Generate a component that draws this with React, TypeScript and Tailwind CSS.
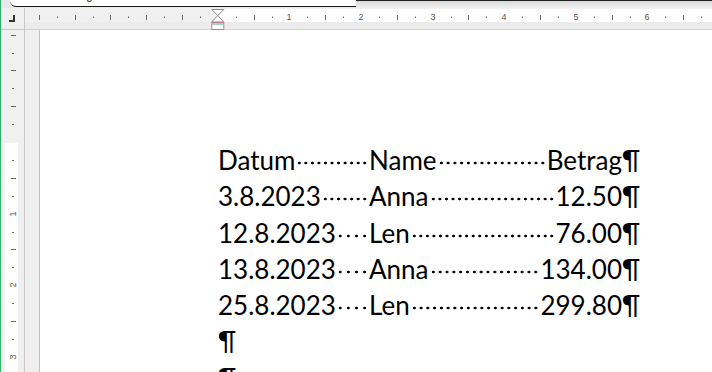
import React from "react";

const INCH = 71.6;
const Q = INCH / 4;

const rows: [string, string, string][] = [
  ["Datum", "Name", "Betrag"],
  ["3.8.2023", "Anna", "12.50"],
  ["12.8.2023", "Len", "76.00"],
  ["13.8.2023", "Anna", "134.00"],
  ["25.8.2023", "Len", "299.80"],
];

function HRuler() {
  const zero = 192.8;
  const ticks = [];
  for (let k = -10; k <= 27; k++) {
    const x = Math.round(zero + k * Q);
    if (k % 4 === 0 && k > 0) {
      ticks.push(
        <text key={k} x={x} y={12.3} textAnchor="middle" fontSize="9" fill="#555" fontFamily="'Liberation Sans', sans-serif">
          {k / 4}
        </text>
      );
    } else if (k === 0) {
      continue;
    } else if (Math.abs(k) % 2 === 1) {
      ticks.push(<rect key={k} x={x} y={8.5} width={1} height={1.5} fill="#666" />);
    } else {
      ticks.push(<rect key={k} x={x} y={7} width={1} height={5} fill="#666" />);
    }
  }
  return (
    <svg width="687" height="22" className="block">
      <rect x="0" y="0" width="687" height="22" fill="#f0f0f0" />
      <rect x={zero} y="1" width="687" height="13" fill="#ffffff" />
      <rect x="0" y="14" width="687" height="7" fill="#ebebeb" />
      <rect x="0" y="21" width="687" height="1" fill="#d2d2d2" />
      {ticks}
      <g transform={`translate(${zero - 6.5},0)`}>
        <polygon points="0.5,1.5 12.5,1.5 6.5,7.5" fill="#fff" stroke="#8c8c8c" strokeWidth="1" />
        <polygon points="6.5,7.5 0.5,14 12.5,14" fill="#fff" stroke="#8c8c8c" strokeWidth="1" />
        <rect x="0.5" y="14.5" width="12" height="7" fill="#fff" stroke="#c07a9e" strokeWidth="1" />
        <line x1="1" y1="16" x2="12" y2="16" stroke="#3cae72" strokeWidth="1" />
      </g>
    </svg>
  );
}

function VRuler() {
  const zero = 112;
  const ticks = [];
  for (let k = -6; k <= 13; k++) {
    const y = Math.round(zero + k * Q);
    if (k % 4 === 0 && k > 0) {
      ticks.push(
        <text
          key={k}
          x={11.5}
          y={y}
          textAnchor="middle"
          dominantBaseline="central"
          fontSize="9"
          fill="#555"
          fontFamily="'Liberation Sans', sans-serif"
          transform={`rotate(-90 11.5 ${y})`}
        >
          {k / 4}
        </text>
      );
    } else if (k === 0) {
      continue;
    } else if (Math.abs(k) % 2 === 1) {
      ticks.push(<rect key={k} x={11} y={y} width={2} height={1} fill="#666" />);
    } else {
      ticks.push(<rect key={k} x={10} y={y} width={5} height={1} fill="#666" />);
    }
  }
  return (
    <svg width="23" height="342" className="block">
      <rect x="0" y="0" width="23" height="342" fill="#f0f0f0" />
      <rect x="4" y={zero + 1} width="13" height="342" fill="#ffffff" />
      {ticks}
    </svg>
  );
}

function Leader() {
  return (
    <span className="mx-[1px] min-w-0 flex-1 bg-[radial-gradient(circle_at_50%_21px,#000_1.15px,transparent_1.7px)] bg-[length:6.5px_100%] bg-repeat-space" />
  );
}

function Row({ a, b, c }: { a: string; b: string; c: string }) {
  return (
    <div className="flex whitespace-nowrap">
      <div className="flex w-[404px]">
        <div className="flex w-[151px] shrink-0">
          <span className="shrink-0">{a}</span>
          <Leader />
        </div>
        <div className="flex min-w-0 flex-1">
          <span className="shrink-0">{b}</span>
          <Leader />
        </div>
        <span className="shrink-0">{c}</span>
      </div>
      <span>¶</span>
    </div>
  );
}

export default function App() {
  return (
    <div className="flex h-[372px] w-[712px] overflow-hidden bg-white">
      <div className="w-px shrink-0 bg-[#2fb36a]" />
      <div className="flex min-w-0 flex-1 flex-col">
        {/* top strip */}
        <div className="relative flex h-[8px] shrink-0 bg-[#e9e9e9]">
          <div className="w-[9px] shrink-0" />
          <div className="relative h-[7px] w-[346px] shrink-0 overflow-hidden rounded-bl-[6px] border-b-[1.5px] border-[#1a1a1a] bg-white">
            <span className="absolute left-[76px] top-[-11px] font-['Liberation_Sans',sans-serif] text-[12px] leading-[12px] text-[#333]">
              g
            </span>
          </div>
          <div className="flex-1 border-t border-[#222] bg-gradient-to-b from-[#d9d9d9] to-[#efefef]" />
        </div>
        {/* ruler row */}
        <div className="flex h-[22px] shrink-0">
          <div className="relative w-[24px] shrink-0 border-r border-b border-[#c8c8c8] bg-[#f0f0f0]">
            <div className="absolute left-[8px] top-[12px] h-[2px] w-[6px] bg-[#333]" />
            <div className="absolute left-[12px] top-[7px] h-[6px] w-[2px] bg-[#333]" />
          </div>
          <HRuler />
        </div>
        {/* body */}
        <div className="flex min-h-0 flex-1">
          <div className="w-[24px] shrink-0 border-r border-[#c8c8c8]">
            <VRuler />
          </div>
          <div className="w-[15px] shrink-0 border-r border-[#c2c2c2] bg-[#efefef]" />
          <div className="min-w-0 flex-1 bg-white pl-[178px] pt-[112px] font-['Lato',sans-serif] text-[26px] leading-[36.25px] text-black">
            {rows.map((r, i) => (
              <Row key={i} a={r[0]} b={r[1]} c={r[2]} />
            ))}
            <div>¶</div>
            <div>¶</div>
          </div>
        </div>
      </div>
    </div>
  );
}
